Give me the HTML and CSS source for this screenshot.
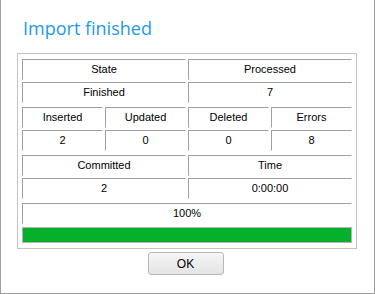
FILE: index.html
```html
<!DOCTYPE html>
<html lang="en">

<head>
    <meta charset="UTF-8">
    <meta name="viewport" content="width=device-width, initial-scale=1.0">
    <title>Import finished</title>
    <link rel="stylesheet" href="styles.css">
</head>

<body>
    <div class="dialog">
        <h1 class="title">Import finished</h1>

        <div class="group">
            <div class="grid">
                <div class="cell wide">State</div>
                <div class="cell wide">Processed</div>
                <div class="cell wide">Finished</div>
                <div class="cell wide">7</div>
            </div>

            <div class="grid">
                <div class="cell">Inserted</div>
                <div class="cell">Updated</div>
                <div class="cell">Deleted</div>
                <div class="cell">Errors</div>
                <div class="cell">2</div>
                <div class="cell">0</div>
                <div class="cell">0</div>
                <div class="cell">8</div>
            </div>

            <div class="grid">
                <div class="cell wide">Committed</div>
                <div class="cell wide">Time</div>
                <div class="cell wide">2</div>
                <div class="cell wide">0:00:00</div>
            </div>

            <div class="grid last">
                <div class="cell full">100%</div>
            </div>

            <div class="progress">
                <div class="progress-fill" style="width: 100%"></div>
            </div>
        </div>

        <div class="buttons">
            <button class="btn">OK</button>
        </div>
    </div>
</body>

</html>
```

FILE: styles.css
```css
body {
    margin: 0;
    background: #ffffff;
    font-family: "Liberation Sans", Arial, sans-serif;
    font-size: 11px;
    color: #000000;
}

.dialog {
    width: 375px;
    height: 294px;
    box-sizing: border-box;
    border: 1px solid #a0a0a0;
    border-top: none;
    background: #ffffff;
}

.title {
    margin: 0;
    padding: 16px 0 0 22px;
    height: 53px;
    box-sizing: border-box;
    font-family: "Open Sans", "Noto Sans", sans-serif;
    font-weight: normal;
    font-size: 18px;
    line-height: 24px;
    color: #1e9ae6;
}

.group {
    margin-left: 16px;
    width: 340px;
    height: 196px;
    box-sizing: border-box;
    border: 1px solid #c4c4c4;
    padding: 5px 4px;
}

.grid {
    display: grid;
    grid-template-columns: repeat(4, 81px);
    column-gap: 2px;
    row-gap: 2px;
    margin-bottom: 4px;
}

.grid.last {
    margin-bottom: 3px;
}

.cell {
    height: 21px;
    box-sizing: border-box;
    border-top: 1px solid #a0a0a0;
    border-left: 1px solid #a0a0a0;
    border-right: 1px solid #ffffff;
    border-bottom: 1px solid #ffffff;
    text-align: center;
    line-height: 19px;
}

.wide {
    grid-column: span 2;
}

.full {
    grid-column: span 4;
}

.progress {
    height: 16px;
    box-sizing: border-box;
    border: 1px solid #b4b4b4;
    background: #e6e6e6;
}

.progress-fill {
    height: 100%;
    background: #06b02a;
}

.buttons {
    display: flex;
    justify-content: center;
    padding-top: 3px;
    padding-right: 4px;
}

.btn {
    width: 76px;
    height: 23px;
    border: 1px solid #b8b8b8;
    border-radius: 3px;
    background: linear-gradient(#f6f6f6, #e4e4e4);
    font-family: "Liberation Sans", Arial, sans-serif;
    font-size: 12px;
    color: #000000;
    padding: 0;
}
```
